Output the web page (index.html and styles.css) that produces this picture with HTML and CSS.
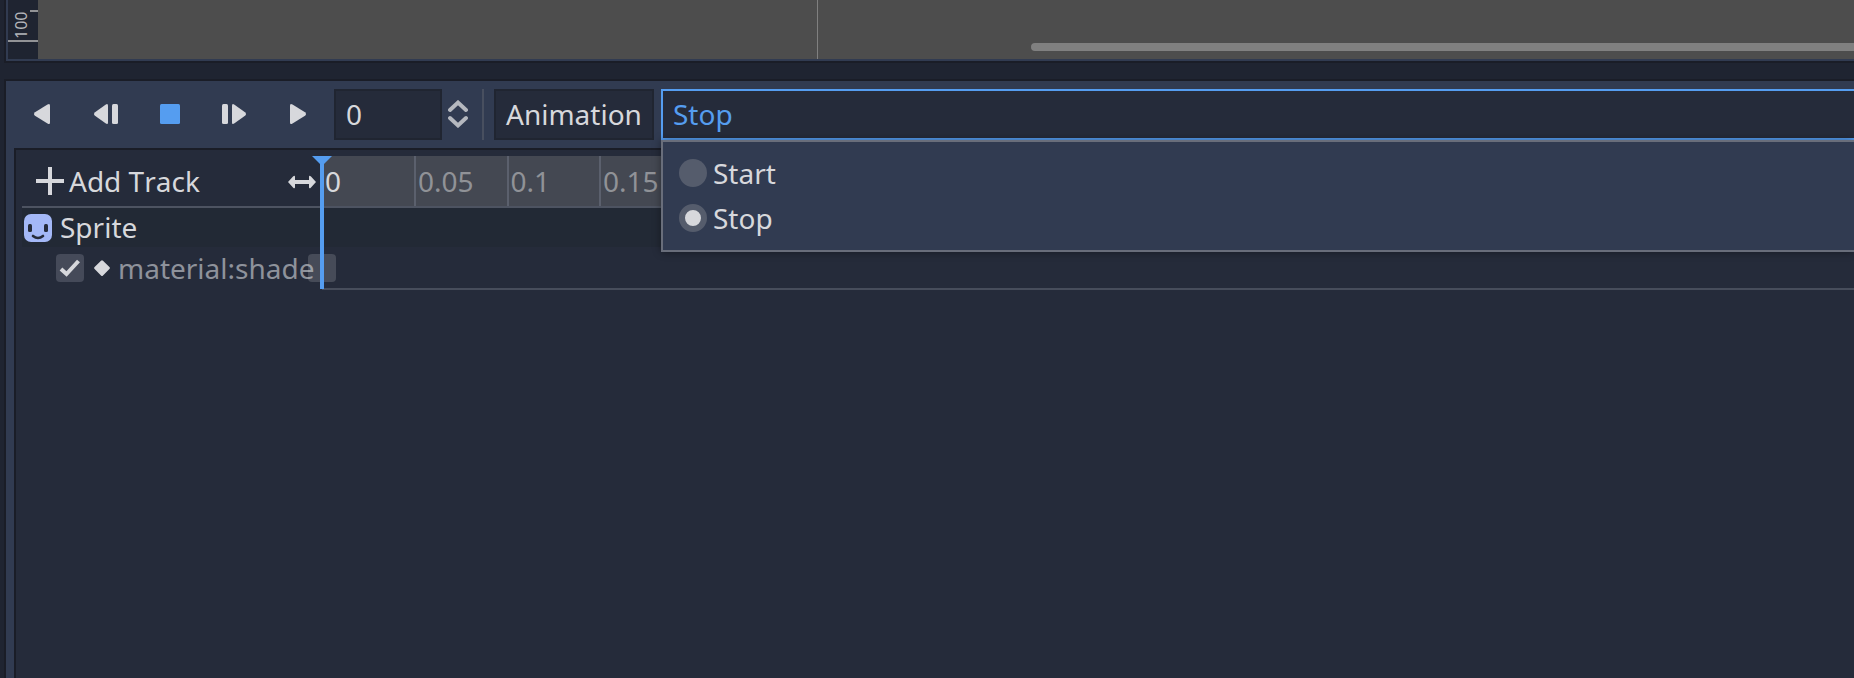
FILE: index.html
```html
<!DOCTYPE html>
<html lang="en">
<head>
<meta charset="utf-8">
<title>Animation editor</title>
<link rel="stylesheet" href="styles.css">
</head>
<body>
<div class="editor">
  <section class="viewport">
    <div class="ruler">
      <span class="ruler-label">100</span>
      <i class="tick tick-minor"></i>
      <i class="tick tick-major"></i>
    </div>
    <div class="canvas"><i class="guide"></i><i class="scrollbar"></i></div>
  </section>
  <section class="panel">
    <div class="toolbar">
      <div class="playback">
        <svg width="32" height="32" viewBox="0 0 32 32"><path d="M24 7.600V24.400Q24 27 21.500 25.500L9 17.800Q7 16 9 14.200L21.500 6.500Q24 5 24 7.600Z"/></svg>
        <svg width="32" height="32" viewBox="0 0 32 32"><path d="M18 7.600V24.400Q18 27 15.500 25.300L5 17.800Q3 16 5 14.200L15.500 6.700Q18 5 18 7.600Z"/><rect x="22" y="6" width="6" height="20" rx="1.500"/></svg>
        <svg class="active" width="32" height="32" viewBox="0 0 32 32"><rect x="6" y="6" width="20" height="20" rx="1.500"/></svg>
        <svg width="32" height="32" viewBox="0 0 32 32"><path d="M14 7.600V24.400Q14 27 16.500 25.300L27 17.800Q29 16 27 14.200L16.500 6.700Q14 5 14 7.600Z"/><rect x="4" y="6" width="6" height="20" rx="1.500"/></svg>
        <svg width="32" height="32" viewBox="0 0 32 32"><path d="M8 7.600V24.400Q8 27 10.500 25.500L23 17.800Q25 16 23 14.200L10.500 6.500Q8 5 8 7.600Z"/></svg>
      </div>
      <div class="field time">0</div>
      <svg class="spinner" width="20" height="28" viewBox="0 0 20 28"><path d="M2 10L10 2.600L18 10M2 18L10 25.400L18 18"/></svg>
      <i class="separator"></i>
      <div class="field menu-button">Animation</div>
      <div class="field select">
        Stop
        <div class="popup">
          <div class="option"><i class="radio"></i>Start</div>
          <div class="option"><i class="radio checked"></i>Stop</div>
        </div>
      </div>
    </div>
    <div class="tracks">
      <div class="header">
        <div class="header-left">
          <svg width="28" height="28" viewBox="0 0 28 28"><path d="M12 0h4v12h12v4H16v12h-4V16H0v-4h12z"/></svg>
          <span class="add">Add Track</span>
          <svg class="resize" width="28" height="16" viewBox="0 0 28 16"><path d="M0 8L5 2.500Q7 .6 7 3V6H21V3Q21 .6 23 2.500L28 8L23 13.500Q21 15.400 21 13V10H7V13Q7 15.400 5 13.500Z"/></svg>
        </div>
        <div class="timeline">
          <span class="mark current">0</span><span class="mark">0.05</span><span class="mark">0.1</span><span class="mark">0.15</span>
        </div>
      </div>
      <div class="node-row">
        <svg width="28" height="28" viewBox="0 0 28 28"><rect width="28" height="28" rx="7" fill="#a4b8f7"/><rect x="4" y="10" width="4" height="8" rx="1.500" fill="#252b3a"/><rect x="20" y="10" width="4" height="8" rx="1.500" fill="#252b3a"/><path d="M9 22Q14 26 19 22" fill="none" stroke="#252b3a" stroke-width="2.600" stroke-linecap="round"/></svg>
        <span class="node-name">Sprite</span>
      </div>
      <div class="property-row">
        <div class="property">
          <svg width="28" height="28" viewBox="0 0 28 28"><rect width="28" height="28" rx="4" fill="#454a59"/><path d="M5 15L10.500 20L22.500 7" fill="none" stroke="#d7d8dc" stroke-width="4"/></svg>
          <svg class="diamond" width="16" height="16" viewBox="0 0 16 16"><path d="M7 .7Q8-.3 9 .7L15.400 7Q16.400 8 15.400 9L9 15.400Q8 16.400 7 15.400L.6 9Q-.4 8 .6 7Z"/></svg>
          <span class="property-name">material:shade</span>
        </div>
        <div class="keys"><i class="key"></i></div>
      </div>
      <svg class="playhead" width="20" height="133" viewBox="0 0 20 133"><path d="M0 0H20L12 8V133H8V8Z"/></svg>
    </div>
  </section>
</div>
</body>
</html>
```
FILE: styles.css
```css
* { box-sizing: border-box; }

body {
  margin: 0;
  background: #1f2431;
  color: #d7d8dc;
  font: 28px/38px "Noto Sans", sans-serif;
  font-kerning: none;
}

svg { display: block; flex: none; fill: #d7d8dc; }
i { display: block; flex: none; }

.editor {
  display: flex;
  flex-direction: column;
  gap: 16px;
  height: 678px;
  padding-left: 4px;
  overflow: hidden;
}

.viewport {
  display: flex;
  height: 63px;
  flex: none;
  border-left: 2px solid #1a1d27;
  border-bottom: 2px solid #1a1d27;
  padding: 0 0 2px 2px;
  background: #313b51;
}

.ruler {
  position: relative;
  width: 30px;
  background: #1f2431;
}
.ruler-label {
  position: absolute;
  left: 2px;
  top: 11px;
  width: 22px;
  height: 28px;
  writing-mode: vertical-rl;
  transform: rotate(180deg);
  font-size: 16px;
  line-height: 22px;
  color: #b3b5ba;
}
.tick { position: absolute; right: 0; height: 2px; background: #929396; }
.tick-minor { top: 10px; width: 8px; }
.tick-major { top: 40px; width: 30px; }

.canvas { position: relative; flex: 1; background: #4d4d4d; }
.guide { position: absolute; left: 779px; top: 0; width: 1px; height: 100%; background: #808080; }
.scrollbar {
  position: absolute;
  left: 993px;
  right: 0;
  top: 43px;
  height: 8px;
  border-radius: 4px 0 0 4px;
  background: #808080;
}

.panel {
  display: flex;
  flex-direction: column;
  flex: 1;
  gap: 8px;
  padding: 8px 0 0 8px;
  border: solid #1a1d27;
  border-width: 2px 0 0 2px;
  background: #313b51;
}

.toolbar { display: flex; height: 51px; flex: none; padding-left: 12px; }
.playback { display: flex; gap: 32px; width: 308px; padding-top: 9px; }
.playback .active { fill: #559df0; }

.field {
  height: 51px;
  padding: 4px 10px;
  border: 2px solid #202531;
  background: #252b3a;
}
.time { width: 108px; }
.spinner {
  margin: 11px 14px 0 6px;
  fill: none;
  stroke: #b5b8bf;
  stroke-width: 4;
  stroke-linecap: round;
}
.separator { width: 2px; margin-right: 10px; background: #484f5f; }
.menu-button { width: 160px; margin-right: 7px; }
.select {
  position: relative;
  flex: 1;
  border-color: #559df0;
  border-right: 0;
  color: #559df0;
}

.popup {
  position: absolute;
  z-index: 3;
  left: -2px;
  right: 0;
  top: 49px;
  height: 112px;
  padding: 12px 16px 0;
  display: flex;
  flex-direction: column;
  gap: 7px;
  border: 2px solid #696e7b;
  border-right: 0;
  background: #313b51;
  box-shadow: 0 0 8px rgba(0, 0, 0, .4);
  color: #d7d8dc;
}
.option { display: flex; align-items: center; gap: 6px; height: 38px; }
.radio { width: 28px; height: 28px; margin-top: -1px; border-radius: 50%; background: #555c6c; }
.checked { border: 6px solid #555c6c; background: #d7d8dc; }

.tracks {
  position: relative;
  flex: 1;
  padding: 6px 0 0 6px;
  border: solid #1a1d27;
  border-width: 2px 0 0 2px;
  background: #252b3a;
}
.header { display: flex; height: 52px; border-bottom: 2px solid #4d5361; }
.header-left { display: flex; align-items: center; width: 300px; padding: 0 6px 0 14px; }
.add { margin: -1px 0 0 5px; }
.resize { margin: 1px 0 0 auto; }
.timeline { display: flex; flex: 1; background: #444852; }
.mark {
  width: 92.500px;
  padding: 6px 0 0 2px;
  border-left: 2px solid #5b606d;
  color: #909297;
}
.current { width: 92px; border: 0; padding-left: 3px; color: #d7d8dc; }

.node-row {
  display: flex;
  align-items: center;
  gap: 8px;
  height: 39px;
  padding-left: 2px;
  background: #222935;
}
.node-name { margin-top: -2px; }
.property-row { display: flex; height: 43px; }
.property { display: flex; align-items: center; width: 300px; padding: 0 0 1px 34px; }
.diamond { margin: 0 8px 0 10px; }
.property-name { color: #8e929b; }
.keys { flex: 1; border-bottom: 2px solid #474d5b; }
.key {
  width: 28px;
  height: 28px;
  margin: 7px 0 0 -14px;
  border-radius: 4px;
  background: rgba(215, 216, 220, .19);
}
.playhead { position: absolute; left: 296px; top: 6px; fill: #559df0; }
```
